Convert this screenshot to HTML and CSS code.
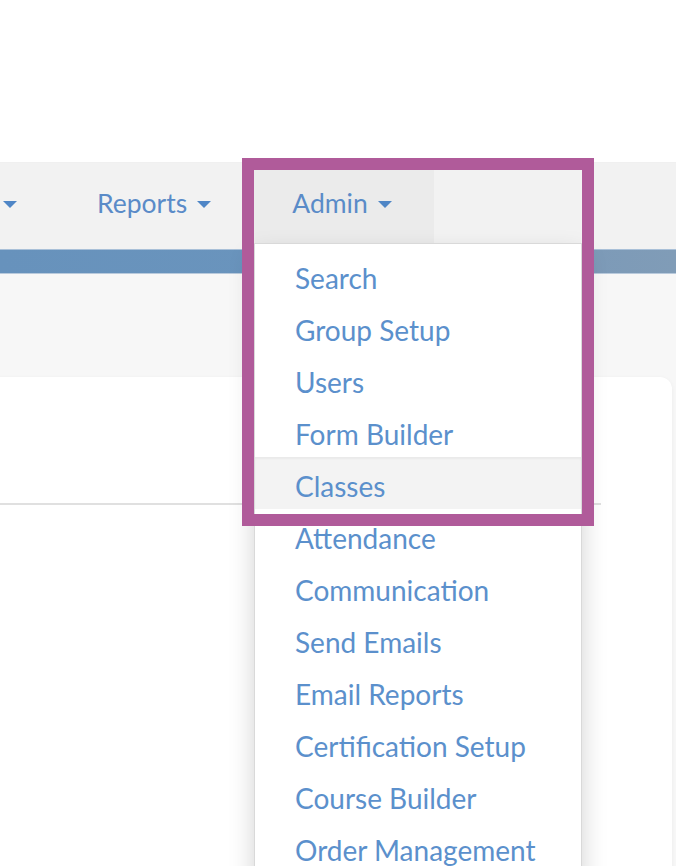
FILE: index.html
```html
<!DOCTYPE html>
<html lang="en">
<head>
<meta charset="utf-8">
<title>Admin menu</title>
<link rel="stylesheet" href="styles.css">
</head>
<body>
<div class="page">
  <div class="top-space"></div>
  <nav class="navbar">
    <div class="nav-item nav-item-first"><span class="caret"></span></div>
    <div class="nav-item">Reports<span class="caret"></span></div>
    <div class="nav-item nav-item-open">Admin<span class="caret"></span></div>
  </nav>
  <div class="blue-bar"></div>
  <main class="main">
    <section class="card">
      <div class="card-header"></div>
      <div class="card-rule"></div>
      <div class="card-body"></div>
    </section>
  </main>

  <ul class="dropdown">
    <li class="dropdown-item">Search</li>
    <li class="dropdown-item">Group Setup</li>
    <li class="dropdown-item">Users</li>
    <li class="dropdown-item">Form Builder</li>
    <li class="dropdown-item dropdown-item-active">Classes</li>
    <li class="dropdown-item">Attendance</li>
    <li class="dropdown-item">Communication</li>
    <li class="dropdown-item">Send Emails</li>
    <li class="dropdown-item">Email Reports</li>
    <li class="dropdown-item">Certification Setup</li>
    <li class="dropdown-item">Course Builder</li>
    <li class="dropdown-item">Order Management</li>
  </ul>

  <div class="highlight-frame"></div>
</div>
</body>
</html>
```

FILE: styles.css
```css
html, body {
  margin: 0;
  padding: 0;
}

body {
  font-family: Lato, "Open Sans", "Liberation Sans", sans-serif;
  background: #f7f7f7;
  overflow: hidden;
}

.page {
  position: relative;
  width: 676px;
  height: 866px;
  overflow: hidden;
  background: #f7f7f7;
}

.top-space {
  height: 162px;
  background: #ffffff;
}

.navbar {
  display: flex;
  height: 87px;
  background: #f2f2f2;
  padding-left: 3px;
  border-top: 1px solid #f0f0f0;
  box-sizing: border-box;
}

.nav-item {
  display: flex;
  align-items: center;
  padding: 0 40px 6px;
  font-size: 26.5px;
  color: #5a8bc8;
  height: 100%;
  box-sizing: border-box;
}

.nav-item-first {
  padding-left: 0;
}

.nav-item-open {
  background: #ebebeb;
  padding-left: 41px;
  padding-right: 42px;
}

.caret {
  display: inline-block;
  width: 0;
  height: 0;
  margin-left: 10px;
  margin-top: 3px;
  border-left: 7px solid transparent;
  border-right: 7px solid transparent;
  border-top: 7px solid #4f86c6;
}

.nav-item-first .caret {
  margin-left: 0;
}

.blue-bar {
  height: 25px;
  box-sizing: border-box;
  border-top: 1px solid #a9c0d8;
  border-bottom: 1px solid #b9cadc;
  background: linear-gradient(to right, #6792bc 0%, #6b95bd 55%, #7c9ab8 85%, #809cb7 100%);
}

.main {
  padding-top: 103px;
  height: 489px;
}

.card {
  margin-left: -20px;
  width: 692px;
  height: 520px;
  background: #ffffff;
  border-radius: 12px;
  box-shadow: 0 1px 4px rgba(0, 0, 0, 0.05);
}

.card-header {
  height: 126px;
}

.card-rule {
  height: 2px;
  background: #e0e0e0;
  margin-left: 20px;
  width: 601px;
}

.dropdown {
  position: absolute;
  left: 254px;
  top: 243px;
  width: 328px;
  box-sizing: border-box;
  margin: 0;
  padding: 5px 0;
  list-style: none;
  background: #ffffff;
  border: 1px solid rgba(0, 0, 0, 0.15);
  box-shadow: 0 12px 24px rgba(0, 0, 0, 0.18);
}

.dropdown-item {
  padding: 9px 40px 3px;
  line-height: 40px;
  font-size: 28px;
  color: #5b90cc;
  white-space: nowrap;
}

.dropdown-item-active {
  background: #f3f3f3;
  box-shadow: inset 0 2px 2px rgba(0, 0, 0, 0.04);
}

.highlight-frame {
  position: absolute;
  left: 242px;
  top: 158px;
  width: 352px;
  height: 368px;
  box-sizing: border-box;
  border: 12px solid #b05b9a;
}
```
